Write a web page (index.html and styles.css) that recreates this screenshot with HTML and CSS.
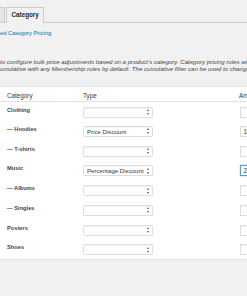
FILE: index.html
```html
<!DOCTYPE html>
<html>
<head>
<meta charset="utf-8">
<link rel="stylesheet" href="styles.css">
</head>
<body>
<div class="page">
  <div class="tabs">
    <span class="tab tab-prev"></span>
    <span class="tab tab-active">Category</span>
  </div>
  <div class="subnav"><a class="sublink" href="#">ed Category Pricing</a></div>
  <p class="desc">to configure bulk price adjustments based on a product's category. <em>Category pricing rules will</em><br>umulative with any Membership rules <em>by default</em>. The cumulative <em>filter</em> can be used to change the</p>
  <table class="rules">
    <thead>
      <tr><th class="c-cat">Category</th><th class="c-type">Type</th><th class="c-amt">Amount</th></tr>
    </thead>
    <tbody>
      <tr><td class="c-cat label">Clothing</td><td class="c-type"><div class="select"><span></span><i class="arrows"></i></div></td><td class="c-amt"><div class="input"></div></td></tr>
      <tr><td class="c-cat label">— Hoodies</td><td class="c-type"><div class="select"><span>Price Discount</span><i class="arrows"></i></div></td><td class="c-amt"><div class="input">10</div></td></tr>
      <tr><td class="c-cat label">— T-shirts</td><td class="c-type"><div class="select"><span></span><i class="arrows"></i></div></td><td class="c-amt"><div class="input"></div></td></tr>
      <tr><td class="c-cat label">Music</td><td class="c-type"><div class="select"><span>Percentage Discount</span><i class="arrows"></i></div></td><td class="c-amt"><div class="input focus">20</div></td></tr>
      <tr><td class="c-cat label">— Albums</td><td class="c-type"><div class="select"><span></span><i class="arrows"></i></div></td><td class="c-amt"><div class="input"></div></td></tr>
      <tr><td class="c-cat label">— Singles</td><td class="c-type"><div class="select"><span></span><i class="arrows"></i></div></td><td class="c-amt"><div class="input"></div></td></tr>
      <tr><td class="c-cat label">Posters</td><td class="c-type"><div class="select"><span></span><i class="arrows"></i></div></td><td class="c-amt"><div class="input"></div></td></tr>
      <tr><td class="c-cat label">Shoes</td><td class="c-type"><div class="select"><span></span><i class="arrows"></i></div></td><td class="c-amt"><div class="input"></div></td></tr>
    </tbody>
  </table>
</div>
</body>
</html>
```

FILE: styles.css
```css
html, body {
  margin: 0;
  padding: 0;
  background: #f1f1f1;
  overflow: hidden;
  width: 247px;
  height: 296px;
}
.page {
  font-family: "Liberation Sans", Arial, sans-serif;
  color: #32373c;
  font-size: 5.85px;
  width: 320px;
}
.tabs {
  display: flex;
  align-items: flex-end;
  gap: 1px;
  height: 22px;
  border-bottom: 1px solid #cccccc;
}
.tab {
  box-sizing: border-box;
  height: 15px;
  border: 1px solid #cccccc;
  border-bottom: none;
  margin-bottom: -1px;
}
.tab-prev {
  width: 5px;
  height: 15px;
  background: #e5e5e5;
  border-left: none;
  margin-bottom: 0;
}
.tab-active {
  height: 16px;
  background: #f1f1f1;
  font-weight: bold;
  font-size: 6.3px;
  line-height: 8px;
  padding: 3px 4.5px 0 4.5px;
  color: #23282d;
}
.subnav {
  margin-top: 6.5px;
  line-height: 7px;
  height: 7px;
}
.sublink {
  color: #0073aa;
  text-decoration: none;
}
.desc {
  margin: 21px 0 0 0;
  font-size: 6.1px;
  line-height: 7px;
  font-style: italic;
  white-space: nowrap;
  color: #444444;
}
.desc em {
  font-style: italic;
}
.rules {
  margin-top: 14.5px;
  border-collapse: collapse;
  table-layout: fixed;
  width: 320px;
  background: #ffffff;
  border-top: 1px solid #e5e5e5;
  border-bottom: 1px solid #e5e5e5;
}
.rules th {
  font-weight: normal;
  font-size: 6.3px;
  text-align: left;
  height: 15px;
  padding: 0;
  vertical-align: top;
  padding-top: 5px;
  line-height: 7px;
  box-sizing: border-box;
  border-bottom: 1px solid #e1e1e1;
  color: #32373c;
}
.rules td {
  padding: 0;
  height: 19.75px;
  vertical-align: top;
  box-sizing: border-box;
}
.c-cat {
  width: 83px;
  padding-left: 7px !important;
  box-sizing: border-box;
}
.c-type {
  width: 156px;
}
.c-amt {
  width: 81px;
}
.label {
  font-weight: bold;
  font-size: 5.7px;
  color: #444444;
  padding-top: 4.5px !important;
  line-height: 7px;
}
.select {
  margin-top: 4.5px;
  box-sizing: border-box;
  width: 70px;
  height: 11px;
  border: 1px solid #dddddd;
  border-radius: 1.5px;
  box-shadow: inset 0 1px 1px rgba(0,0,0,0.05);
  background: #ffffff;
  display: flex;
  align-items: center;
  gap: 1px;
  padding-left: 3px;
  padding-right: 2px;
  font-size: 6.1px;
  color: #32373c;
  white-space: nowrap;
  overflow: hidden;
}
.select span {
  flex: 1;
  min-width: 0;
  overflow: hidden;
}
.arrows {
  position: relative;
  width: 3px;
  height: 6px;
  flex: none;
}
.arrows::before, .arrows::after {
  content: "";
  position: absolute;
  left: 0;
  border-left: 1.5px solid transparent;
  border-right: 1.5px solid transparent;
}
.arrows::before {
  top: 0;
  border-bottom: 2.2px solid #555555;
}
.arrows::after {
  bottom: 0;
  border-top: 2.2px solid #555555;
}
.input {
  margin-top: 4.5px;
  margin-left: 1px;
  box-sizing: border-box;
  width: 60px;
  height: 11px;
  border: 1px solid #dddddd;
  box-shadow: inset 0 1px 1px rgba(0,0,0,0.05);
  background: #ffffff;
  padding-left: 2.5px;
  font-size: 6.3px;
  line-height: 9px;
  color: #32373c;
}
.input.focus {
  border-color: #5b9dd9;
  box-shadow: 0 0 1px rgba(30,140,190,0.8);
}
```
